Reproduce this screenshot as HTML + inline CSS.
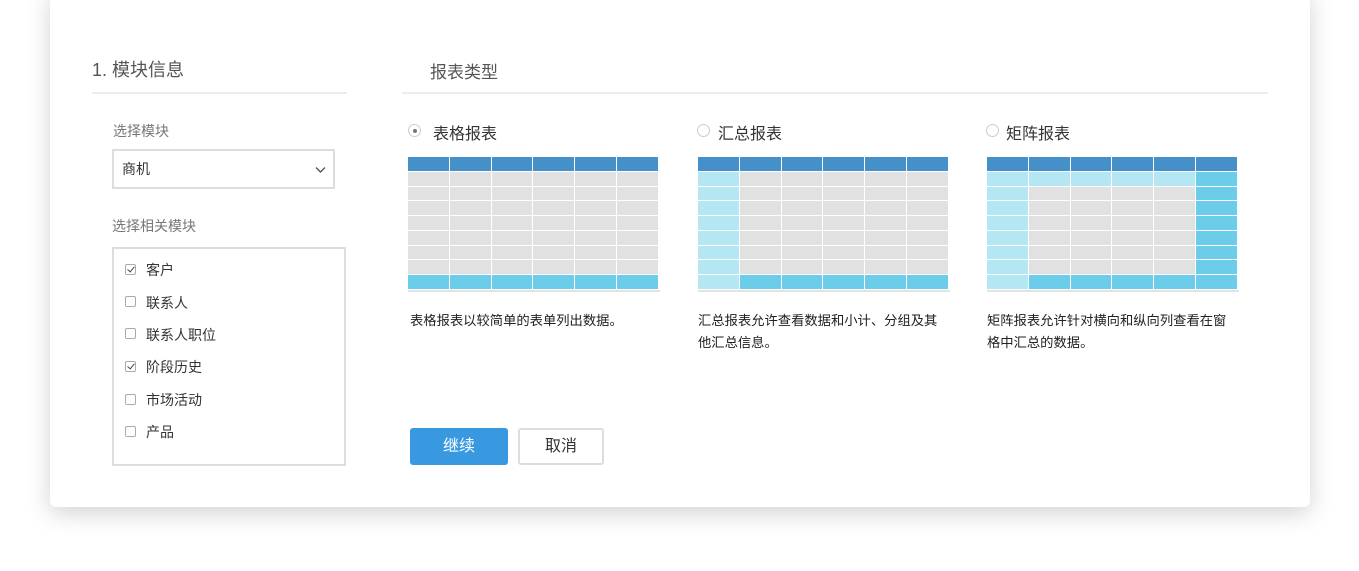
<!DOCTYPE html>
<html><head><meta charset="utf-8"><style>
body{margin:0;width:1359px;height:571px;background:#fff;font-family:"Liberation Sans","Noto Sans CJK SC",sans-serif;position:relative;overflow:hidden}
.card{position:absolute;left:50px;top:-10px;width:1260px;height:517px;background:#fff;border-radius:6px;box-shadow:0 6px 24px rgba(0,0,0,.18)}
.a{position:absolute;white-space:nowrap}
.rule{position:absolute;height:2px;background:#ececec}
.tbl{position:absolute;top:157px;width:250px;height:132px;display:grid;grid-template-columns:repeat(6,1fr);grid-template-rows:repeat(9,1fr);gap:1px;background:#fff}
.ul{position:absolute;top:290px;width:252px;height:2px;background:#e3e3e3}
.radio{position:absolute;width:13px;height:13px;border:1px solid #ccc;border-radius:50%;box-sizing:border-box;background:#fff}
.radio.on::after{content:"";position:absolute;left:3.5px;top:3.5px;width:4px;height:4px;border-radius:50%;background:#777}
.cb{position:absolute;left:125px;width:11px;height:11px;border:1px solid #aaa;border-radius:2px;box-sizing:border-box;background:#fff}
.cb.on::after{content:"";position:absolute;left:2.5px;top:0px;width:3px;height:6px;border:solid #444;border-width:0 1.5px 1.5px 0;transform:rotate(40deg)}
.lbl{font-size:14px;color:#333}
.desc{font-size:13.3px;color:#222;line-height:22px;white-space:normal;width:256px}
</style></head><body>
<div class="card"></div>
<div class="a" style="left:92px;top:56px;font-size:18px;color:#555">1. 模块信息</div>
<div class="rule" style="left:92px;top:92px;width:255px"></div>
<div class="a" style="left:430px;top:58px;font-size:17px;color:#555">报表类型</div>
<div class="rule" style="left:402px;top:92px;width:866px"></div>

<div class="a" style="left:113px;top:121px;font-size:14px;color:#777">选择模块</div>
<div class="a" style="left:112px;top:149px;width:223px;height:40px;border:2px solid #ddd;box-sizing:border-box"></div>
<div class="a" style="left:122px;top:159px;font-size:14px;color:#333">商机</div>
<svg class="a" style="left:315px;top:166px" width="11" height="8"><path d="M1 1.5 L5.5 6 L10 1.5" fill="none" stroke="#555" stroke-width="1.4"/></svg>
<div class="a" style="left:112px;top:216px;font-size:14px;color:#777">选择相关模块</div>
<div class="a" style="left:112px;top:247px;width:234px;height:219px;border:2px solid #ddd;box-sizing:border-box"></div>
<div class="cb on" style="top:264px"></div><div class="a lbl" style="left:146px;top:260px">客户</div>
<div class="cb" style="top:296px"></div><div class="a lbl" style="left:146px;top:293px">联系人</div>
<div class="cb" style="top:328px"></div><div class="a lbl" style="left:146px;top:325px">联系人职位</div>
<div class="cb on" style="top:361px"></div><div class="a lbl" style="left:146px;top:357px">阶段历史</div>
<div class="cb" style="top:394px"></div><div class="a lbl" style="left:146px;top:390px">市场活动</div>
<div class="cb" style="top:426px"></div><div class="a lbl" style="left:146px;top:422px">产品</div>

<div class="radio on" style="left:408px;top:124px"></div>
<div class="a" style="left:433px;top:120px;font-size:16px;color:#333">表格报表</div>
<div class="radio" style="left:697px;top:124px"></div>
<div class="a" style="left:718px;top:120px;font-size:16px;color:#333">汇总报表</div>
<div class="radio" style="left:986px;top:124px"></div>
<div class="a" style="left:1006px;top:120px;font-size:16px;color:#333">矩阵报表</div>

<div class="tbl" id="t1" style="left:408px"></div><div class="ul" style="left:408px"></div>
<div class="tbl" id="t2" style="left:698px"></div><div class="ul" style="left:698px"></div>
<div class="tbl" id="t3" style="left:987px"></div><div class="ul" style="left:987px"></div>

<div class="a desc" style="left:410px;top:310px">表格报表以较简单的表单列出数据。</div>
<div class="a desc" style="left:698px;top:310px">汇总报表允许查看数据和小计、分组及其<br>他汇总信息。</div>
<div class="a desc" style="left:987px;top:310px">矩阵报表允许针对横向和纵向列查看在窗<br>格中汇总的数据。</div>

<div class="a" style="left:410px;top:428px;width:98px;height:37px;background:#3898e0;border-radius:3px;color:#fff;font-size:16px;text-align:center;line-height:37px">继续</div>
<div class="a" style="left:518px;top:428px;width:86px;height:37px;border:2px solid #ddd;box-sizing:border-box;border-radius:3px;color:#333;font-size:16px;text-align:center;line-height:33px">取消</div>
<script>
var H='#4590c8',G='#e1e1e1',L='#b5e6f3',C='#6bcde9';
function f(id,fn){var t=document.getElementById(id),s='';for(var r=0;r<9;r++)for(var c=0;c<6;c++)s+='<div style="background:'+fn(r,c)+'"></div>';t.innerHTML=s;}
f('t1',function(r,c){return r==0?H:r==8?C:G});
f('t2',function(r,c){return r==0?H:c==0?L:r==8?C:G});
f('t3',function(r,c){if(r==0)return H;if(c==5)return C;if(c==0||r==1)return L;if(r==8)return C;return G});
</script>
</body></html>
